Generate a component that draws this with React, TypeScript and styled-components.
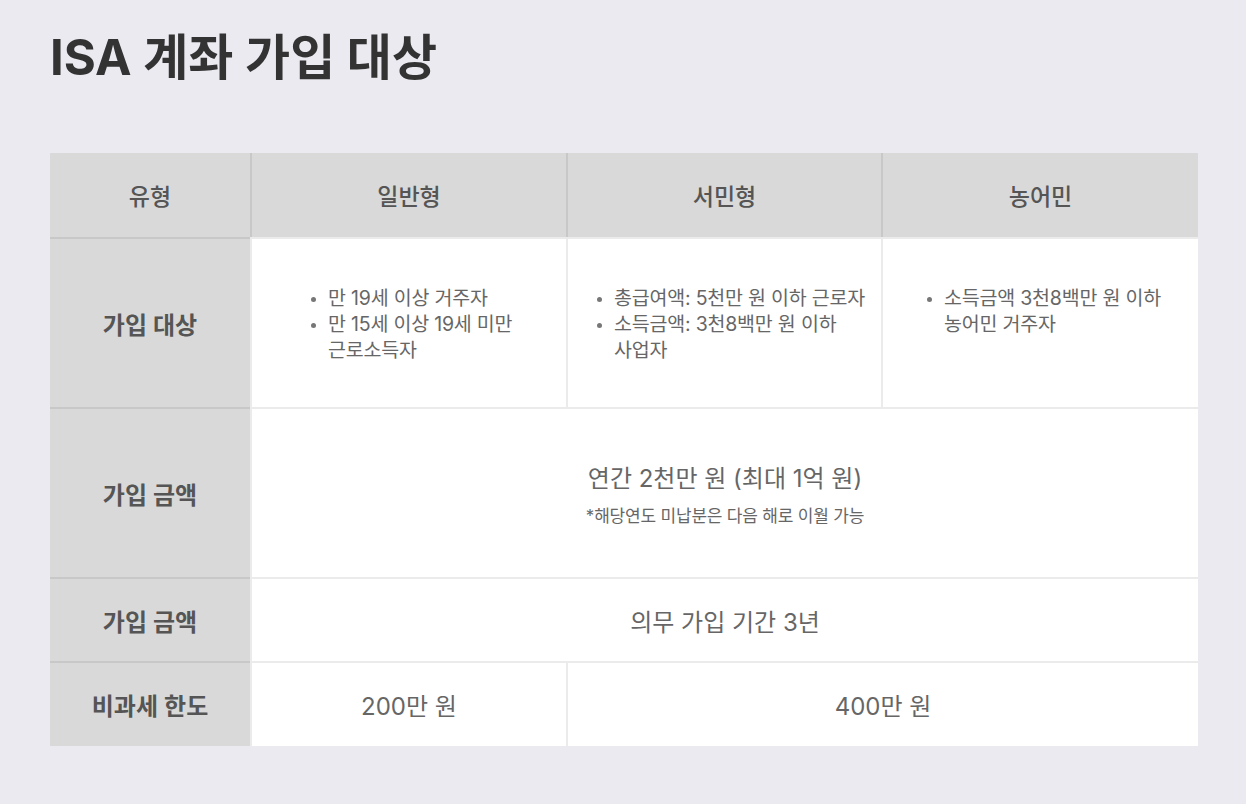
import React from "react";
import styled, { createGlobalStyle } from "styled-components";

const Global = createGlobalStyle`
  html, body { margin: 0; padding: 0; background: #ebeaf0; }
  body { font-family: Inter, "Noto Sans CJK KR", sans-serif; }
`;

const Page = styled.div`
  width: 1246px;
  height: 804px;
  box-sizing: border-box;
  padding: 26px 48px 0 50px;
  background: #ebeaf0;
`;

const Title = styled.h1`
  margin: 0;
  font-size: 49px;
  line-height: 64px;
  font-weight: 700;
  color: #333;
  letter-spacing: 0;
`;

const Table = styled.div`
  margin-top: 63px;
  width: 1148px;
  display: grid;
  grid-template-columns: 200px 316px 315px 317px;
  grid-template-rows: 84px 170px 170px 84px 85px;
`;

const Cell = styled.div<{ $head?: boolean; $span?: number; $left?: boolean; $top?: boolean; $align?: "center" | "top" }>`
  box-sizing: border-box;
  background: ${(p) => (p.$head ? "#d9d9d9" : "#ffffff")};
  grid-column: span ${(p) => p.$span ?? 1};
  display: flex;
  flex-direction: column;
  align-items: center;
  justify-content: ${(p) => (p.$align === "top" ? "flex-start" : "center")};
  border-left: ${(p) => (p.$left ? "2px solid rgba(0,0,0,0.08)" : "none")};
  border-top: ${(p) => (p.$top ? "2px solid rgba(0,0,0,0.08)" : "none")};
  color: #666;
`;

const HeadText = styled.span<{ $bold?: boolean }>`
  font-size: ${(p) => (p.$bold ? 24 : 23)}px;
  font-weight: ${(p) => (p.$bold ? 600 : 500)};
  color: #555;
  letter-spacing: 0;
`;

const BigText = styled.span`
  font-size: 24px;
  font-weight: 400;
  color: #666;
  letter-spacing: 0;
`;

const Note = styled.span`
  margin-top: 8px;
  font-size: 17px;
  color: #666;
  letter-spacing: -0.2px;
`;

const List = styled.ul`
  margin: 0;
  padding: 46px 0 0 18px;
  box-sizing: border-box;
  max-width: 100%;
  list-style: disc;
  word-break: keep-all;
`;

const Wrap = styled.div<{ $pl: number; $pr: number }>`
  width: 100%;
  box-sizing: border-box;
  padding: 0 ${(p) => p.$pr}px 0 ${(p) => p.$pl}px;
  display: flex;
  justify-content: center;
`;

const Item = styled.li`
  font-size: 19.5px;
  line-height: 26px;
  color: #666;
  letter-spacing: -0.2px;
  &::marker { color: #777; font-size: 15px; }
`;

export default function App() {
  return (
    <>
      <Global />
      <Page>
        <Title>ISA 계좌 가입 대상</Title>
        <Table>
          <Cell $head><HeadText>유형</HeadText></Cell>
          <Cell $head $left><HeadText>일반형</HeadText></Cell>
          <Cell $head $left><HeadText>서민형</HeadText></Cell>
          <Cell $head $left><HeadText>농어민</HeadText></Cell>

          <Cell $head $top><HeadText $bold>가입 대상</HeadText></Cell>
          <Cell $left $top $align="top">
            <Wrap $pl={58} $pr={44}>
              <List>
                <Item>만 19세 이상 거주자</Item>
                <Item>만 15세 이상 19세 미만 근로소득자</Item>
              </List>
            </Wrap>
          </Cell>
          <Cell $left $top $align="top">
            <Wrap $pl={28} $pr={12}>
              <List>
                <Item>총급여액: 5천만 원 이하 근로자</Item>
                <Item>소득금액: 3천8백만 원 이하 사업자</Item>
              </List>
            </Wrap>
          </Cell>
          <Cell $left $top $align="top">
            <Wrap $pl={43} $pr={30}>
              <List>
                <Item>소득금액 3천8백만 원 이하 농어민 거주자</Item>
              </List>
            </Wrap>
          </Cell>

          <Cell $head $top><HeadText $bold>가입 금액</HeadText></Cell>
          <Cell $left $top $span={3}>
            <BigText>연간 2천만 원 (최대 1억 원)</BigText>
            <Note>*해당연도 미납분은 다음 해로 이월 가능</Note>
          </Cell>

          <Cell $head $top><HeadText $bold>가입 금액</HeadText></Cell>
          <Cell $left $top $span={3}>
            <BigText>의무 가입 기간 3년</BigText>
          </Cell>

          <Cell $head $top><HeadText $bold>비과세 한도</HeadText></Cell>
          <Cell $left $top><BigText>200만 원</BigText></Cell>
          <Cell $left $top $span={2}><BigText>400만 원</BigText></Cell>
        </Table>
      </Page>
    </>
  );
}
